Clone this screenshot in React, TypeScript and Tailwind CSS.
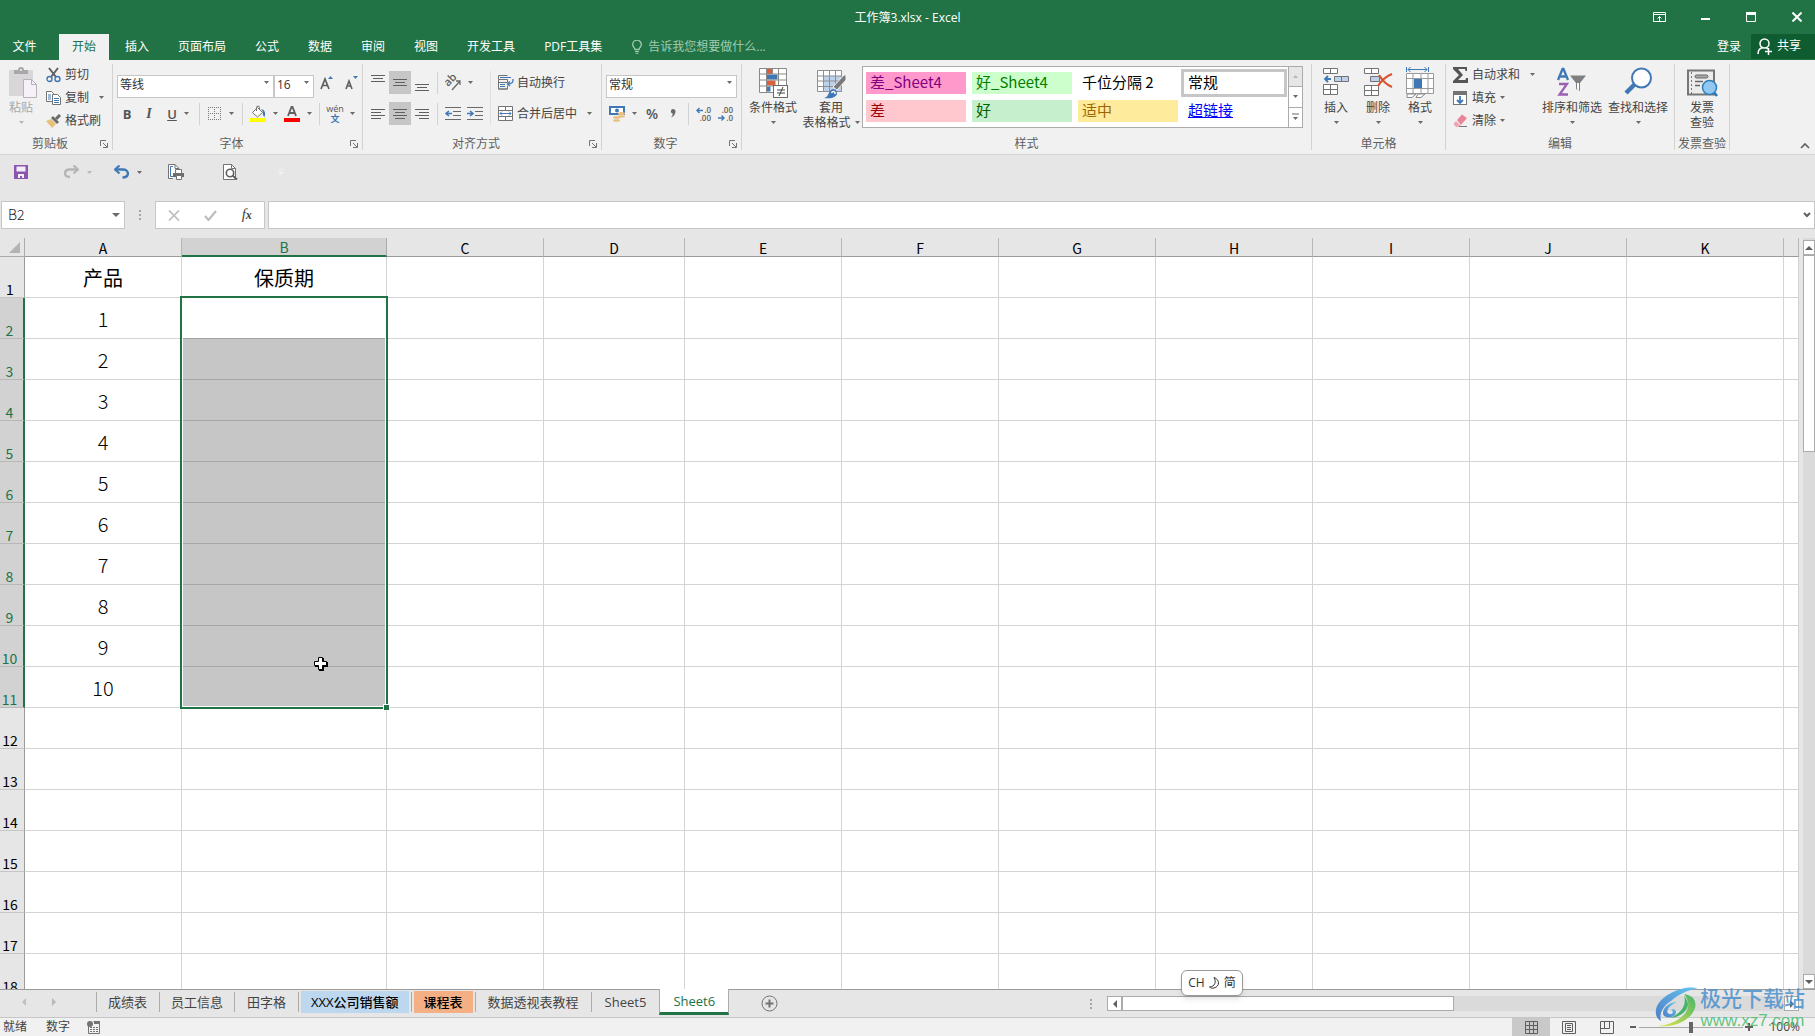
import type { ReactNode } from 'react';

const GRAY = '#737373';
const BLUE = '#3f78b5';

interface SvgProps {
  w: number;
  h: number;
  children: ReactNode;
}

function Svg({ w, h, children }: SvgProps) {
  return (
    <svg width={w} height={h} viewBox={`0 0 ${w} ${h}`} fill="none" className="shrink-0" aria-hidden="true">
      {children}
    </svg>
  );
}

function Caret({ light = false }: { light?: boolean }) {
  return (
    <Svg w={5} h={3}>
      <path d="M0 0h5L2.5 3z" fill={light ? '#b8b8b8' : '#6a6a6a'} />
    </Svg>
  );
}

function Lines({ rows, w = 14, h = 16 }: { rows: [number, number, number][]; w?: number; h?: number }) {
  return (
    <Svg w={w} h={h}>
      {rows.map(([x, y, len]) => (
        <path key={y} d={`M${x} ${y + 0.5}h${len}`} stroke="#5f5f5f" />
      ))}
    </Svg>
  );
}

/* clipboard */

function PasteIcon() {
  return (
    <Svg w={32} h={32}>
      <g transform="translate(4 0)">
        <rect x="0" y="3" width="24" height="26" rx="1" fill="#d9d6da" />
        <path d="M5 7V3h4a3 3 0 0 1 6 0h4v4z" fill="#a9a7aa" />
        <circle cx="12" cy="3" r="1" fill="#f1f1f1" />
        <path d="M14.5 12.5h8l5 5v13h-13z" fill="#f6f1f8" stroke="#b5b2b7" />
        <path d="M22.5 12.5v5h5" stroke="#b5b2b7" />
      </g>
    </Svg>
  );
}

function ScissorsIcon() {
  return (
    <Svg w={15} h={16}>
      <path d="M3 1l7 9M12 1L5 10" stroke="#5f5f5f" strokeWidth="2" />
      <circle cx="3.5" cy="12" r="2.5" stroke={BLUE} strokeWidth="1.4" />
      <circle cx="11.5" cy="12" r="2.5" stroke={BLUE} strokeWidth="1.4" />
    </Svg>
  );
}

function CopyIcon() {
  return (
    <Svg w={15} h={14}>
      <path d="M.5.5h5l2 2v8h-7z" fill="#fff" stroke={GRAY} />
      <path d="M2 4h3M2 6h3M2 8h3" stroke={BLUE} />
      <path d="M6.5 3.5h5l3 3v7h-8z" fill="#fff" stroke={GRAY} />
      <path d="M8 7.5h5M8 9.5h5M8 11.5h5" stroke={BLUE} />
    </Svg>
  );
}

function BrushIcon() {
  return (
    <Svg w={16} h={14}>
      <path d="M0 7l5-2 5 5-4 4z" fill="#e9bf7c" />
      <path d="M5 4l2-2 6 6-2 2z" fill="#6a6a6a" />
      <path d="M10 5l4-4" stroke="#6a6a6a" strokeWidth="3" />
    </Svg>
  );
}

/* font */

function BorderIcon() {
  return (
    <Svg w={14} h={14}>
      <path
        d="M.5 0v13M6.5 0v13M12.5 0v13M0 .5h13M0 6.5h13M0 12.5h13"
        stroke="#7a7a7a"
        strokeDasharray="1 1"
      />
    </Svg>
  );
}

function FillIcon() {
  return (
    <Svg w={16} h={17}>
      <path d="M2.5 7.5l5-5 5 5-5 4.500z" fill="#fff" stroke={GRAY} />
      <path d="M6.5 6V2.5a1.500 1.500 0 0 1 3 0V5" stroke={GRAY} />
      <path d="M11 4c4 1 5 4 3.500 8-1.500-1-2-3-1.500-5z" fill={BLUE} />
      <rect y="13" width="16" height="4" fill="#ffff00" />
    </Svg>
  );
}

function FontColorIcon() {
  return (
    <Svg w={16} h={17}>
      <path d="M4 11L7.5 2h1L12 11M5.2 8h5.600" stroke="#5f5f5f" strokeWidth="1.8" />
      <rect y="13" width="16" height="4" fill="#ff0000" />
    </Svg>
  );
}

/* alignment */

function OrientationIcon() {
  return (
    <Svg w={16} h={16}>
      <text
        x="0"
        y="0"
        fontSize="11"
        fill="#5f5f5f"
        fontWeight="600"
        fontFamily="Open Sans, sans-serif"
        transform="translate(3 12) rotate(-45)"
      >
        ab
      </text>
      <path d="M7 15L15 6M11 6h4v4" stroke="#6a6a6a" strokeWidth="1.3" />
    </Svg>
  );
}

function IndentIcon({ out = false }: { out?: boolean }) {
  return (
    <Svg w={16} h={13}>
      <path d="M0 .5h16M8 4.5h8M8 8.5h8M0 12.5h16" stroke="#6a6a6a" />
      {out ? (
        <path d="M7 6.5H2M4 4L1 6.5 4 9" stroke={BLUE} strokeWidth="1.6" />
      ) : (
        <path d="M0 6.5h5M3 4l3 2.500L3 9" stroke={BLUE} strokeWidth="1.6" />
      )}
    </Svg>
  );
}

function WrapIcon() {
  return (
    <Svg w={16} h={15}>
      <path d="M9.5.5h-9v4h9M.5 4.5v9.500h9v-3.500M.5 7.5h9v-3M.5 14h9" stroke={GRAY} />
      <path d="M2 2.5h11M2 9.5h5M2 11.5h5" stroke={BLUE} />
      <path d="M15 4c.5 4-2 5-5 5M12 6.5L9.5 9l2.500 2" stroke={BLUE} strokeWidth="1.3" />
    </Svg>
  );
}

function MergeIcon() {
  return (
    <Svg w={15} h={15}>
      <path d="M.5.5h14v14H.5zM.5 4.5h14M.5 10.5h14M7.5.5v4M7.5 10.5v4" fill="#fff" stroke={GRAY} />
      <path d="M2 7.5h11M4 5.5l-2 2 2 2M11 5.5l2 2-2 2" stroke={BLUE} />
    </Svg>
  );
}

/* number */

function CurrencyIcon() {
  return (
    <Svg w={16} h={16}>
      <rect x="1" y="1" width="14" height="7" fill="#fff" stroke={BLUE} strokeWidth="2" />
      <circle cx="8" cy="4.5" r="2" fill={BLUE} />
      <path d="M4 9h12v7H4z" fill="#f1f1f1" />
      <ellipse cx="12.5" cy="7.5" rx="3.5" ry="1.5" fill="#e9bf7c" />
      <ellipse cx="12.5" cy="10.5" rx="3.5" ry="1.2" fill="#e9bf7c" />
      <ellipse cx="7.5" cy="11.5" rx="3.5" ry="1.3" fill="#e9bf7c" />
      <ellipse cx="7.5" cy="14.5" rx="3.5" ry="1.3" fill="#e9bf7c" />
    </Svg>
  );
}

function DecimalIcon({ more = false }: { more?: boolean }) {
  return (
    <Svg w={16} h={14}>
      <g fontSize="8" fontFamily="Open Sans, sans-serif" fontWeight="600" fill="#5f5f5f">
        <text x="15" y="6" textAnchor="end">
          {more ? '.0' : '.00'}
        </text>
        <text x="15" y="14" textAnchor="end">
          {more ? '.00' : '.0'}
        </text>
      </g>
      {more ? (
        <path d="M7 3.5H1M3.5 1L1 3.5 3.5 6" stroke={BLUE} strokeWidth="1.4" />
      ) : (
        <path d="M0 11h6M3.5 8.5L6 11l-2.500 2.500" stroke={BLUE} strokeWidth="1.4" />
      )}
    </Svg>
  );
}

/* styles */

function ConditionalIcon() {
  return (
    <Svg w={30} h={32}>
      <path d="M1.5 1.5h27v24h-27z" fill="#fff" />
      <path d="M8.5 2h6v5h-6zM8.5 13.5h9v5h-9z" fill="#d9603b" />
      <path d="M8.5 7.5h11v5h-11zM8.5 19.5h4v5h-4z" fill={BLUE} />
      <path d="M1.5 1.5h27v24h-27zM8.5 1.5v24M1.5 7h27M1.5 13h27M1.5 19h27M14.5 1.5v5M20.5 1.5v24" stroke="#8a8a8a" />
      <rect x="15.5" y="18.5" width="14" height="12" fill="#fff" stroke="#6a6a6a" />
      <path d="M19 23h8M19 26h8M25 20l-4 9" stroke="#444" />
    </Svg>
  );
}

function TableFormatIcon() {
  return (
    <Svg w={30} h={32}>
      <path d="M1.5 3.5h24v21h-24z" fill="#fff" />
      <path d="M7.5 9h18v15.500h-18z" fill="#bdd1ea" />
      <path d="M1.5 3.5h24v21h-24zM7.5 3.5v21M13.5 3.5v21M19.5 3.5v21M1.5 9h24M1.5 14h24M1.5 19.5h24" stroke="#8f8f8f" />
      <path d="M28 8h2v5l-9 10-4-3z" fill="#7a7a7a" stroke="#f1f1f1" />
      <path d="M8 31c4-1 4-4 6-7s7-2 7 2-5 6-13 5z" fill={BLUE} />
      <path d="M15.5 26c1-2 4-2 3.500 1" stroke="#fff" strokeWidth="1.5" />
    </Svg>
  );
}

/* cells */

function InsertIcon() {
  return (
    <Svg w={30} h={32}>
      <path d="M2.5 1.5h14v5h-14zM9.5 1.5v5M2.5 17.5h14v10h-14zM9.5 17.5v10M2.5 22.5h14" fill="#fff" stroke={GRAY} />
      <path d="M13.5 9.5h14v5h-14zM20.5 9.5v5" fill="#bdd1ea" stroke={GRAY} />
      <path d="M10 12H4M7 9l-3 3 3 3" stroke={BLUE} strokeWidth="1.8" />
    </Svg>
  );
}

function DeleteIcon() {
  return (
    <Svg w={30} h={32}>
      <path d="M1.5 1.5h14v5h-14zM8.5 1.5v5M1.5 18.5h14v10h-14zM8.5 18.5v10M1.5 23.5h14" fill="#fff" stroke={GRAY} />
      <path d="M7.5 9.5h9v5h-9z" fill="#bdd1ea" stroke={GRAY} />
      <path d="M16 8c3 5 8 10 13 12M29 7c-5 2-11 7-14 12" stroke="#d9532c" strokeWidth="2.2" />
    </Svg>
  );
}

function FormatIcon() {
  return (
    <Svg w={30} h={32}>
      <path d="M1.5 0v5M23.5 0v5M3 2.5h19M5.5 0L3 2.5 5.5 5M19.5 0l2.500 2.500L19.5 5" stroke={BLUE} />
      <path d="M1.5 6.5h27v20h-27z" fill="#fff" />
      <path d="M1.5 6.5h27v20h-27zM8 6.5v20M16 6.5v20M23 6.5v20M1.5 11.5h27M1.5 21.5h27" stroke="#9a9a9a" />
      <rect x="9" y="12" width="8" height="9" fill={BLUE} />
      <path d="M2 30.5h5l4-3.500h-9zM11 30.5h5l4-3.500h-7z" fill="#fff" stroke="#8a8a8a" />
    </Svg>
  );
}

/* editing */

function SumIcon() {
  return (
    <Svg w={15} h={16}>
      <path d="M0 0h14v4h-1.500L12 2H5l5 6-5 5h7.500l.5-2H15v5H0v-2l6-6L0 2z" fill="#555" />
    </Svg>
  );
}

function FillDownIcon() {
  return (
    <Svg w={15} h={16}>
      <rect x=".5" y="1.5" width="13" height="13" fill="#fff" stroke={GRAY} />
      <rect width="14" height="4" y="1" fill={GRAY} />
      <path d="M7 6v7M4 10l3 3 3-3" stroke={BLUE} strokeWidth="1.8" />
    </Svg>
  );
}

function EraserIcon() {
  return (
    <Svg w={15} h={14}>
      <path d="M4 6l5-5.500 5 3.500-6 7z" fill="#e98598" />
      <path d="M3 7l4.500 4.500L5 13H3L.5 10z" fill="#f0a5b3" />
      <path d="M6 12.5h8" stroke="#777" />
    </Svg>
  );
}

function SortIcon() {
  return (
    <Svg w={32} h={32}>
      <path d="M2 13L6.5 2h1L12 13M3.5 9.5h7" stroke={BLUE} strokeWidth="2.3" />
      <path d="M3 17h8L3.5 27.5H12" stroke="#9b5fb5" strokeWidth="2.3" />
      <path d="M14 8.5h16l-6 7.500v8l-4-2v-6z" fill="#7f7f7f" />
      <path d="M21.5 16v6l1 1v-7" stroke="#fff" />
    </Svg>
  );
}

function FindIcon() {
  return (
    <Svg w={30} h={32}>
      <path d="M12 17L3 26" stroke={BLUE} strokeWidth="4.5" />
      <circle cx="18.5" cy="11" r="9.5" fill="#fdfdfd" stroke={BLUE} strokeWidth="2" />
    </Svg>
  );
}

function InvoiceIcon() {
  return (
    <Svg w={32} h={32}>
      <path d="M2 3.5h26v24H2z" fill="#ececec" stroke="#777" strokeWidth="2" />
      <path d="M5.5 5v22" stroke="#777" strokeDasharray="2 2" />
      <rect x="9" y="8" width="13" height="3" rx="1.5" fill="#aaa" stroke="#666" />
      <path d="M9 14.5h8M9 18.5h5" stroke="#666" strokeWidth="1.5" />
      <path d="M27 24l4 5" stroke="#2b79b3" strokeWidth="2.5" />
      <circle cx="23.5" cy="20.5" r="7" fill="#92c6f3" stroke="#2f7fb8" strokeWidth="1.5" />
    </Svg>
  );
}

/* ribbon building blocks */

function Group({ title, width, launcher, children }: { title: string; width: string; launcher?: boolean; children: ReactNode }) {
  return (
    <section className={`flex h-[94px] shrink-0 ${width}`}>
      <div className="flex min-w-0 flex-1 flex-col">
        <div className="h-[76px]">{children}</div>
        <div className="flex h-4 items-center">
          <h2 className="flex-1 text-center text-[12px] leading-4 whitespace-nowrap text-[#5f5f5f]">{title}</h2>
          {launcher && (
            <button aria-label={title} className="w-3">
              <Svg w={8} h={8}>
                <path d="M.5 6V.5H6M3 3l4 4M7.5 3v4.500H3" stroke={GRAY} />
              </Svg>
            </button>
          )}
        </div>
      </div>
      <div className="my-1 w-px bg-[#d2d2d2]" />
    </section>
  );
}

function BigButton({ icon, lines, width, dim, caret = 'below' }: { icon: ReactNode; lines: string[]; width: string; dim?: boolean; caret?: 'below' | 'side' | 'none' }) {
  return (
    <button
      className={`flex shrink-0 flex-col items-center pt-[7px] text-[12px] leading-[15px] whitespace-nowrap ${width} ${dim ? 'text-[#a8a8a8]' : 'text-[#444]'}`}
    >
      {icon}
      <span className="pt-px">{lines[0]}</span>
      <span className="flex h-[15px] items-center gap-1">
        {lines[1]}
        {caret !== 'none' && <Caret light={dim} />}
      </span>
    </button>
  );
}

function SmallButton({ icon, label, caret }: { icon: ReactNode; label: string; caret?: string }) {
  return (
    <button className="flex h-[23px] items-center text-[12px] leading-4 whitespace-nowrap text-[#444]">
      <span className="flex w-[19px]">{icon}</span>
      {label}
      {caret && (
        <span className={caret}>
          <Caret />
        </span>
      )}
    </button>
  );
}

function Tool({ label, width = 'w-[22px]', active, caret, children }: { label: string; width?: string; active?: boolean; caret?: boolean; children: ReactNode }) {
  return (
    <button
      aria-label={label}
      className={`flex h-[23px] shrink-0 items-center justify-center gap-[7px] text-[#555] ${width} ${active ? 'bg-[#c6c6c6]' : ''}`}
    >
      {children}
      {caret && <Caret />}
    </button>
  );
}

function Combo({ label, value, width }: { label: string; value: string; width: string }) {
  return (
    <label className={`relative block h-[23px] shrink-0 ${width}`}>
      <select
        aria-label={label}
        className="h-full w-full appearance-none border border-[#c6c6c6] bg-white pb-[2px] pl-[2px] text-[12px] leading-4 text-[#333]"
      >
        <option>{value}</option>
      </select>
      <span className="pointer-events-none absolute inset-y-0 right-[5px] flex items-center">
        <Caret />
      </span>
    </label>
  );
}

function Rule() {
  return <div className="mx-1 h-[22px] w-px shrink-0 bg-[#d2d2d2]" />;
}

const styleCells = [
  { label: '差_Sheet4', look: 'bg-[#ff99cc] text-[#800080]' },
  { label: '好_Sheet4', look: 'bg-[#ccffcc] text-[#008000]' },
  { label: '千位分隔 2', look: 'text-black' },
  { label: '常规', look: 'text-black outline-3 outline-[#c6c6c6]' },
  { label: '差', look: 'bg-[#ffc7ce] text-[#9c0006]' },
  { label: '好', look: 'bg-[#c6efce] text-[#006100]' },
  { label: '适中', look: 'bg-[#ffeb9c] text-[#9c6500]' },
  { label: '超链接', look: 'text-[#0000ff] underline' },
];

function StyleGallery() {
  return (
    <div className="mt-[6px] flex h-[62px] w-[441px] border border-[#ababab] bg-white">
      <div className="grid flex-1 grid-cols-4 gap-x-[6px] gap-y-[6px] py-[5px] pr-1 pl-[3px]">
        {styleCells.map((cell) => (
          <button
            key={cell.label}
            className={`h-[22px] pb-[2px] pl-1 text-left font-[Noto_Sans_CJK_SC,sans-serif] text-[15px] leading-5 whitespace-nowrap ${cell.look}`}
          >
            {cell.label}
          </button>
        ))}
      </div>
      <div className="flex w-[14px] flex-col border-l border-[#ababab]">
        <button aria-label="上一行" className="flex flex-1 items-center justify-center bg-[#e6e6e6]">
          <Svg w={5} h={3}>
            <path d="M0 3h5L2.5 0z" fill="#b8b8b8" />
          </Svg>
        </button>
        <button aria-label="下一行" className="flex flex-1 items-center justify-center border-y border-[#ababab]">
          <Caret />
        </button>
        <button aria-label="其他" className="flex flex-1 items-center justify-center">
          <Svg w={7} h={8}>
            <path d="M0 1h7" stroke="#6a6a6a" />
            <path d="M1 4h5L3.5 7z" fill="#6a6a6a" />
          </Svg>
        </button>
      </div>
    </div>
  );
}

function Ribbon() {
  return (
    <div className="flex h-[95px] shrink-0 border-b border-[#d2d2d2] bg-[#f1f1f1]">
      <Group title="剪贴板" width="w-[113px]" launcher>
        <div className="flex">
          <BigButton icon={<PasteIcon />} lines={['粘贴', '']} width="w-[42px]" dim />
          <div className="flex flex-col items-start pt-[3px] pl-1">
            <SmallButton icon={<ScissorsIcon />} label="剪切" />
            <SmallButton icon={<CopyIcon />} label="复制" caret="pl-[10px]" />
            <SmallButton icon={<BrushIcon />} label="格式刷" />
          </div>
        </div>
      </Group>

      <Group title="字体" width="w-[250px]" launcher>
        <div className="flex flex-col gap-2 pt-[11px] pl-1">
          <div className="flex">
            <Combo label="字体" value="等线" width="w-[157px]" />
            <Combo label="字号" value="16" width="w-10" />
            <Tool label="增大字号" width="w-[26px]">
              <Svg w={14} h={14}>
                <path d="M1 13L5 3l4 10M2.5 9.5h5" stroke="#5f5f5f" strokeWidth="1.7" />
                <path d="M8 3h5L10.5 0z" fill={BLUE} />
              </Svg>
            </Tool>
            <Tool label="减小字号" width="w-[22px]">
              <Svg w={13} h={14}>
                <path d="M1 13l3-8 3 8M2 10h4" stroke="#5f5f5f" strokeWidth="1.6" />
                <path d="M8 0h5l-2.500 3z" fill={BLUE} />
              </Svg>
            </Tool>
          </div>
          <div className="flex items-center">
            <Tool label="加粗" width="w-5">
              <b className="text-[13px] leading-4">B</b>
            </Tool>
            <Tool label="倾斜" width="w-6">
              <i className="font-[Liberation_Serif,serif] text-[14px] leading-4 font-bold">I</i>
            </Tool>
            <Tool label="下划线" width="w-[34px]" caret>
              <span className="text-[13px] leading-4 font-semibold underline">U</span>
            </Tool>
            <Rule />
            <Tool label="边框" width="w-[34px]" caret>
              <BorderIcon />
            </Tool>
            <Rule />
            <Tool label="填充颜色" width="w-[34px]" caret>
              <FillIcon />
            </Tool>
            <Tool label="字体颜色" width="w-[34px]" caret>
              <FontColorIcon />
            </Tool>
            <Rule />
            <Tool label="拼音" width="w-[34px]" caret>
              <span className="flex w-4 flex-col items-center text-[9px] leading-[10px]">
                <span>wén</span>
                <span className="font-bold text-[#3f78b5]">文</span>
              </span>
            </Tool>
          </div>
        </div>
      </Group>

      <Group title="对齐方式" width="w-[239px]" launcher>
        <div className="flex pt-[11px] pl-1">
          <div className="flex flex-col gap-2">
            <div className="flex items-center">
              <Tool label="顶端对齐">
                <Lines rows={[[0, 0, 14], [2, 3, 10], [0, 6, 14]]} />
              </Tool>
              <Tool label="垂直居中" active>
                <Lines rows={[[0, 4, 14], [2, 7, 10], [0, 10, 14]]} />
              </Tool>
              <Tool label="底端对齐">
                <Lines rows={[[0, 9, 14], [2, 12, 10], [0, 15, 14]]} />
              </Tool>
              <Rule />
              <Tool label="方向" width="w-[34px]" caret>
                <OrientationIcon />
              </Tool>
            </div>
            <div className="flex items-center">
              <Tool label="左对齐">
                <Lines rows={[[0, 3, 14], [0, 6, 10], [0, 9, 14], [0, 12, 10]]} />
              </Tool>
              <Tool label="居中" active>
                <Lines rows={[[0, 3, 14], [2, 6, 10], [0, 9, 14], [2, 12, 10]]} />
              </Tool>
              <Tool label="右对齐">
                <Lines rows={[[0, 3, 14], [4, 6, 10], [0, 9, 14], [4, 12, 10]]} />
              </Tool>
              <Rule />
              <Tool label="减少缩进量">
                <IndentIcon out />
              </Tool>
              <Tool label="增加缩进量">
                <IndentIcon />
              </Tool>
            </div>
          </div>
          <div className="mx-1 h-[54px] w-px bg-[#dedede]" />
          <div className="flex flex-col gap-2 pl-[3px]">
            <SmallButton icon={<WrapIcon />} label="自动换行" />
            <SmallButton icon={<MergeIcon />} label="合并后居中" caret="pl-[10px]" />
          </div>
        </div>
      </Group>

      <Group title="数字" width="w-[140px]" launcher>
        <div className="flex flex-col gap-2 pt-[11px] pl-1">
          <Combo label="数字格式" value="常规" width="w-[131px]" />
          <div className="flex items-center">
            <Tool label="会计数字格式" width="w-[34px]" caret>
              <CurrencyIcon />
            </Tool>
            <Tool label="百分比样式" width="w-6">
              <span className="text-[14px] leading-4 font-semibold">%</span>
            </Tool>
            <Tool label="千位分隔样式" width="w-5">
              <Svg w={8} h={9}>
                <path d="M3 0a2.500 2.500 0 0 1 2.500 3C5 6 3 8 1 8.5c1.500-2 2-3 1.500-4A2.300 2.300 0 0 1 3 0z" fill="#6a6a6a" />
              </Svg>
            </Tool>
            <Rule />
            <Tool label="增加小数位数">
              <DecimalIcon more />
            </Tool>
            <Tool label="减少小数位数">
              <DecimalIcon />
            </Tool>
          </div>
        </div>
      </Group>

      <Group title="样式" width="w-[570px]">
        <div className="flex pl-1">
          <BigButton icon={<ConditionalIcon />} lines={['条件格式', '']} width="w-[54px]" />
          <BigButton icon={<TableFormatIcon />} lines={['套用', '表格格式']} width="w-[62px]" caret="side" />
          <StyleGallery />
        </div>
      </Group>

      <Group title="单元格" width="w-[134px]">
        <div className="flex pl-[3px]">
          <BigButton icon={<InsertIcon />} lines={['插入', '']} width="w-[42px]" />
          <BigButton icon={<DeleteIcon />} lines={['删除', '']} width="w-[42px]" />
          <BigButton icon={<FormatIcon />} lines={['格式', '']} width="w-[42px]" />
        </div>
      </Group>

      <Group title="编辑" width="w-[229px]">
        <div className="flex pl-[7px]">
          <div className="flex w-[86px] flex-col items-start pt-[3px]">
            <SmallButton icon={<SumIcon />} label="自动求和" caret="pl-[10px]" />
            <SmallButton icon={<FillDownIcon />} label="填充" caret="pl-1" />
            <SmallButton icon={<EraserIcon />} label="清除" caret="pl-1" />
          </div>
          <BigButton icon={<SortIcon />} lines={['排序和筛选', '']} width="w-[66px]" />
          <BigButton icon={<FindIcon />} lines={['查找和选择', '']} width="w-[66px]" />
        </div>
      </Group>

      <Group title="发票查验" width="w-[55px]">
        <BigButton icon={<InvoiceIcon />} lines={['发票', '查验']} width="w-[54px]" caret="none" />
      </Group>

      <div className="flex flex-1 items-end justify-end pr-[5px] pb-[5px]">
        <button aria-label="折叠功能区">
          <Svg w={10} h={6}>
            <path d="M1 5l4-4 4 4" stroke="#5f5f5f" strokeWidth="1.7" />
          </Svg>
        </button>
      </div>
    </div>
  );
}

/* title bar, tabs */

function TitleBar() {
  return (
    <header className="grid h-[34px] shrink-0 grid-cols-3 items-center text-white">
      <div />
      <h1 className="pt-px text-center text-[12px] leading-4">工作簿3.xlsx - Excel</h1>
      <div className="flex justify-end gap-[10px]">
        <button aria-label="功能区显示选项" className="flex h-8 w-9 items-center justify-center">
          <Svg w={13} h={10}>
            <path d="M.5.5h12v9H.5zM.5 2.5h12" stroke="#fff" />
            <path d="M6.5 9V4.5M4.5 6.5l2-2 2 2" stroke="#fff" />
          </Svg>
        </button>
        <button aria-label="最小化" className="flex h-8 w-9 items-center justify-center">
          <Svg w={9} h={10}>
            <path d="M0 7h9" stroke="#fff" strokeWidth="2" />
          </Svg>
        </button>
        <button aria-label="最大化" className="flex h-8 w-9 items-center justify-center">
          <Svg w={10} h={10}>
            <path d="M.5.5h9v9h-9z" stroke="#fff" />
            <path d="M0 1.5h10" stroke="#fff" strokeWidth="3" />
          </Svg>
        </button>
        <button aria-label="关闭" className="flex h-8 w-9 items-center justify-center">
          <Svg w={10} h={10}>
            <path d="M.5.5l9 9M9.5.5l-9 9" stroke="#fff" strokeWidth="2" />
          </Svg>
        </button>
      </div>
    </header>
  );
}

const ribbonTabs = ['插入', '页面布局', '公式', '数据', '审阅', '视图', '开发工具', 'PDF工具集'];

function RibbonTabs() {
  return (
    <nav className="flex h-[26px] shrink-0 text-[12px] leading-[24px] whitespace-nowrap text-white">
      <button className="w-[59px] pr-[10px]">文件</button>
      <button className="bg-[#f1f1f1] px-[13px] text-[#217346]">开始</button>
      <div className="flex gap-px pl-[2px]">
        {ribbonTabs.map((tab) => (
          <button key={tab} className="px-[14px]">
            {tab}
          </button>
        ))}
      </div>
      <button className="flex items-center gap-[6px] pl-4 text-[#a0cbb0]">
        <Svg w={10} h={14}>
          <path d="M3 9.5C3 8 .7 7 .7 4.5a4.300 4.300 0 0 1 8.600 0C9.3 7 7 8 7 9.5z" stroke="#a0cbb0" strokeWidth="1.3" />
          <path d="M3 11.5h4M3.5 13.3h3" stroke="#a0cbb0" />
        </Svg>
        告诉我您想要做什么...
      </button>
      <div className="flex flex-1 justify-end">
        <button className="px-[10px]">登录</button>
        <button className="flex h-[25px] w-16 items-center gap-1 bg-[#0e5c2f] pb-px pl-[6px]">
          <Svg w={16} h={17}>
            <circle cx="7.5" cy="5.5" r="4.5" stroke="#fff" strokeWidth="1.5" />
            <path d="M1 16c0-4 2-6 5-6.500M9 9.5l2 1.500M8 13.5h7M11.5 10v7" stroke="#fff" strokeWidth="1.5" />
          </Svg>
          共享
        </button>
      </div>
    </nav>
  );
}

function QuickAccess() {
  return (
    <div className="flex h-[46px] shrink-0 items-center pb-3 pl-[14px]">
      <button aria-label="保存">
        <Svg w={14} h={14}>
          <path d="M0 0h14v14H0z" fill="#8b55ad" />
          <path d="M2.5 1.5h9v5h-9zM4 9h6v4H8v-2H6v2H4z" fill="#f3edf7" />
        </Svg>
      </button>
      <button aria-label="恢复" className="ml-9 flex items-center gap-2">
        <Svg w={15} h={14}>
          <path d="M13 4.5H5.5C-.5 5-.5 12 6 12" stroke="#b5b5b5" strokeWidth="2.4" />
          <path d="M9.5.5l4.500 4-4.500 4" stroke="#b5b5b5" strokeWidth="2.2" />
        </Svg>
        <Caret light />
      </button>
      <button aria-label="撤消" className="ml-[22px] flex items-center gap-2">
        <Svg w={15} h={14}>
          <path d="M2 4.5h7.500c6 .5 6 8-1 8" stroke={BLUE} strokeWidth="2.4" />
          <path d="M5.5.5L1 4.5l4.500 4" stroke={BLUE} strokeWidth="2.2" />
        </Svg>
        <Caret />
      </button>
      <button aria-label="快速打印" className="ml-[26px]">
        <Svg w={17} h={16}>
          <path d="M5 14.5H.5V.5H7l4 4" fill="#fff" stroke={GRAY} />
          <path d="M7 .5v4h4" stroke={GRAY} />
          <path d="M5 2.5H2.5v10H5" stroke={BLUE} />
          <path d="M5 9h11v4H5z" fill="#6a6a6a" />
          <path d="M7.5 5.5h6v4h-6zM8.5 11.5h5v4h-5z" fill="#fff" stroke={GRAY} />
        </Svg>
      </button>
      <button aria-label="打印预览" className="ml-[38px]">
        <Svg w={15} h={16}>
          <path d="M.5.5h8l4 4v11H.5z" fill="#fff" stroke={GRAY} />
          <path d="M8.5.5v4h4" stroke={GRAY} />
          <circle cx="7" cy="9" r="3.7" fill="#fff" stroke="#5f5f5f" strokeWidth="1.6" />
          <path d="M9.5 11.5l4.500 4" stroke="#5f5f5f" strokeWidth="2" />
        </Svg>
      </button>
      <button aria-label="自定义快速访问工具栏" className="ml-10">
        <Svg w={6} h={7}>
          <path d="M0 .5h6M.5 3h5L3 6z" stroke="#f0f0f0" fill="#f0f0f0" />
        </Svg>
      </button>
    </div>
  );
}

function FormulaBar() {
  return (
    <div className="flex h-7 shrink-0 pl-px">
      <label className="relative w-[124px]">
        <input
          aria-label="名称框"
          defaultValue="B2"
          className="h-full w-full border border-[#c6c6c6] bg-white pb-[3px] pl-[6px] font-[Noto_Sans_CJK_SC,sans-serif] text-[14px] leading-5 font-light text-[#222]"
        />
        <span className="pointer-events-none absolute inset-y-0 right-[5px] flex items-center">
          <Svg w={8} h={4}>
            <path d="M0 0h8L4 4z" fill="#6a6a6a" />
          </Svg>
        </span>
      </label>
      <div className="flex w-[30px] items-center justify-center">
        <Svg w={2} h={10}>
          <path d="M0 0h2v2H0zM0 4h2v2H0zM0 8h2v2H0z" fill="#a6a6a6" />
        </Svg>
      </div>
      <div className="flex w-[110px] items-center justify-around border border-[#c6c6c6] bg-white">
        <button aria-label="取消">
          <Svg w={12} h={11}>
            <path d="M1 .5l10 10M11 .5l-10 10" stroke="#bdbdbd" strokeWidth="1.7" />
          </Svg>
        </button>
        <button aria-label="输入">
          <Svg w={13} h={11}>
            <path d="M1 6l3.500 4L12 1" stroke="#bdbdbd" strokeWidth="2.2" />
          </Svg>
        </button>
        <button aria-label="插入函数" className="pb-[2px] font-[Liberation_Serif,serif] text-[15px] leading-5 text-[#444] italic">
          f<span className="text-[12px] font-bold">x</span>
        </button>
      </div>
      <label className="relative ml-[3px] flex-1">
        <input aria-label="编辑栏" className="h-full w-full border border-[#c6c6c6] bg-white px-2 text-[13px]" />
        <span className="pointer-events-none absolute inset-y-0 right-1 flex items-center">
          <Svg w={8} h={6}>
            <path d="M1 1l3 3 3-3" stroke="#5f5f5f" strokeWidth="2" />
          </Svg>
        </span>
      </label>
    </div>
  );
}

/* sheet */

const columns = [
  { name: 'A', width: 'w-[157px]' },
  { name: 'B', width: 'w-[205px]' },
  { name: 'C', width: 'w-[157px]' },
  { name: 'D', width: 'w-[141px]' },
  { name: 'E', width: 'w-[157px]' },
  { name: 'F', width: 'w-[157px]' },
  { name: 'G', width: 'w-[157px]' },
  { name: 'H', width: 'w-[157px]' },
  { name: 'I', width: 'w-[157px]' },
  { name: 'J', width: 'w-[157px]' },
  { name: 'K', width: 'w-[157px]' },
  { name: '', width: '' },
];

const rowCount = 18;

function cellText(row: number, column: string) {
  if (row === 1) return { A: '产品', B: '保质期' }[column];
  if (column === 'A' && row <= 11) return String(row - 1);
  return undefined;
}

function Selection() {
  return (
    <div className="pointer-events-none absolute -top-[2px] -left-[2px] z-10 h-[413px] w-[208px] border-2 border-[#217346]">
      <div className="h-full border border-white" />
      <div className="absolute -right-1 -bottom-1 h-[7px] w-[7px] border border-white bg-[#217346]" />
      <div className="absolute right-[57px] bottom-[35px]">
        <Svg w={16} h={16}>
          <path d="M6 2h5v4h4v5h-4v4H6v-4H2V6h4z" fill="#000" />
          <path d="M5.5 1.5h4v4h4v4h-4v4h-4v-4h-4v-4h4z" fill="#fff" stroke="#000" />
        </Svg>
      </div>
    </div>
  );
}

function Sheet() {
  return (
    <table className="w-full table-fixed border-separate border-spacing-0 font-[Noto_Sans_CJK_SC,sans-serif]">
      <thead>
        <tr className="h-[19px] text-[14px] leading-4">
          <th className="w-[25px] border-r border-b border-[#ababab] p-0">
            <span className="flex justify-end pr-1">
              <Svg w={11} h={11}>
                <path d="M11 0v11H0z" fill="#b4b4b4" />
              </Svg>
            </span>
          </th>
          {columns.map(({ name, width }) => (
            <th
              key={name}
              className={`border-r p-0 pt-px font-normal ${width} ${
                name === 'B'
                  ? 'border-b-2 border-r-[#ababab] border-b-[#217346] bg-[#d2d2d2] text-[#217346]'
                  : 'border-b border-r-[#b8b8b8] border-b-[#9b9b9b] text-black'
              }`}
            >
              {name}
            </th>
          ))}
        </tr>
      </thead>
      <tbody>
        {Array.from({ length: rowCount }, (_, i) => i + 1).map((row) => {
          const inSelection = row >= 2 && row <= 11;
          return (
            <tr key={row} className="h-[41px]">
              <th
                className={`border-b p-0 align-bottom text-[14px] leading-4 font-normal ${
                  inSelection
                    ? 'border-r-2 border-r-[#217346] border-b-[#b8b8b8] bg-[#d2d2d2] text-[#217346]'
                    : 'border-r border-r-[#9b9b9b] border-b-[#c6c6c6] text-black'
                }`}
              >
                <span className="block pr-1">{row}</span>
              </th>
              {columns.map(({ name }) => (
                <td
                  key={name}
                  className={`relative border-r border-b p-0 pt-[2px] text-center text-[20px] leading-6 text-black ${
                    name === 'B' && row > 2 && inSelection
                      ? 'border-[#a6a6a6] bg-[#c6c6c6]'
                      : name === 'B' && row === 2
                        ? 'border-r-[#d4d4d4] border-b-[#a6a6a6] bg-white'
                        : 'border-[#d4d4d4] bg-white'
                  } ${row === 1 ? 'font-normal' : 'font-light'}`}
                >
                  {cellText(row, name)}
                  {name === 'B' && row === 2 && <Selection />}
                </td>
              ))}
            </tr>
          );
        })}
      </tbody>
    </table>
  );
}

function Arrow({ d, fill = '#5f5f5f' }: { d: string; fill?: string }) {
  return (
    <Svg w={8} h={8}>
      <path d={d} fill={fill} />
    </Svg>
  );
}

function VerticalScroll() {
  return (
    <div className="ml-1 flex w-3 shrink-0 flex-col bg-[#dadada] pt-[2px]">
      <button aria-label="向上滚动" className="flex h-[15px] shrink-0 items-center justify-center border border-[#ababab] bg-white">
        <Arrow d="M0 6h8L4 2z" />
      </button>
      <div className="h-[197px] shrink-0 border border-[#ababab] bg-white" />
      <div className="flex-1" />
      <button aria-label="向下滚动" className="flex h-[15px] shrink-0 items-center justify-center border border-[#ababab] bg-white">
        <Arrow d="M0 2h8L4 6z" />
      </button>
    </div>
  );
}

const sheetTabs = [
  { name: '成绩表', look: 'pr-3 pl-[11px]' },
  { name: '员工信息', look: 'px-[11px]' },
  { name: '田字格', look: 'px-3' },
  { name: 'XXX公司销售额', look: 'mx-[2px] px-[10px] bg-[#bdd7ee] text-black font-medium' },
  { name: '课程表', look: 'mx-[2px] px-[10px] bg-[#f4b084] text-black font-medium' },
  { name: '数据透视表教程', look: 'px-3' },
  { name: 'Sheet5', look: 'px-[13px]' },
];

function SheetTabs() {
  return (
    <div className="flex h-7 shrink-0 border-t border-[#9b9b9b]">
      <button aria-label="上一张工作表" className="flex w-12 items-center justify-center pb-1">
        <Arrow d="M6 0v8L2 4z" fill="#c0c0c0" />
      </button>
      <button aria-label="下一张工作表" className="mr-4 flex w-8 items-center pb-1 pl-[2px]">
        <Arrow d="M2 0v8l4-4z" fill="#b8b8b8" />
      </button>
      <div className="flex items-start text-[13px] leading-[18px] whitespace-nowrap text-[#444]">
        {sheetTabs.map((tab) => (
          <div key={tab.name} className="flex h-6 items-center">
            <div className="h-5 w-px bg-[#ababab]" />
            <button className={`h-[22px] pb-px ${tab.look}`}>{tab.name}</button>
          </div>
        ))}
        <button className="-mt-px h-[26px] border-x border-b-3 border-x-[#ababab] border-b-[#217346] bg-white px-[13px] text-[#217346]">
          Sheet6
        </button>
      </div>
      <button aria-label="新工作表" className="ml-8 flex items-center">
        <Svg w={17} h={17}>
          <circle cx="8.5" cy="8.5" r="7.5" stroke={GRAY} />
          <path d="M8.5 4.5v8M4.5 8.5h8" stroke={GRAY} strokeWidth="2" />
        </Svg>
      </button>
      <div className="flex flex-1 items-center justify-end">
        <Svg w={2} h={10}>
          <path d="M0 0h2v2H0zM0 4h2v2H0zM0 8h2v2H0z" fill="#a6a6a6" />
        </Svg>
      </div>
      <div className="mt-[6px] mr-4 ml-[15px] flex h-[15px] w-[692px] bg-[#dadada]">
        <button aria-label="向左滚动" className="flex w-[15px] items-center justify-center border border-[#ababab] bg-white">
          <Arrow d="M6 0v8L2 4z" />
        </button>
        <div className="w-[48%] border border-[#ababab] bg-white" />
        <div className="flex-1" />
        <button aria-label="向右滚动" className="flex w-[15px] items-center justify-center border border-[#ababab] bg-white">
          <Arrow d="M2 0v8l4-4z" />
        </button>
      </div>
    </div>
  );
}

function StatusBar() {
  return (
    <footer className="flex h-[19px] shrink-0 items-center border-t border-[#c6c6c6] bg-[#f1f1f1] pr-[15px] pl-[3px] text-[12px] leading-[18px] whitespace-nowrap text-[#444]">
      <span>就绪</span>
      <span className="ml-[19px]">数字</span>
      <button aria-label="录制宏" className="ml-[17px]">
        <Svg w={13} h={13}>
          <path d="M1.5 4.5v8h11v-12h-6" stroke={GRAY} />
          <path d="M7 0h6v3H7z" fill={GRAY} />
          <circle cx="3" cy="3" r="3" fill={GRAY} />
          <path d="M3 6.5h8M3 8.5h8M3 10.5h8" stroke={GRAY} strokeDasharray="2 1" />
        </Svg>
      </button>
      <div className="flex-1" />
      <button aria-label="普通" className="flex h-[18px] w-[38px] items-center justify-center bg-[#c9c9c9]">
        <Svg w={13} h={13}>
          <path d="M.5.5h12v12H.5zM4.5.5v12M8.5.5v12M.5 4.5h12M.5 8.5h12" stroke="#5f5f5f" />
        </Svg>
      </button>
      <button aria-label="页面布局" className="flex w-[38px] justify-center">
        <Svg w={14} h={13}>
          <path d="M.5.5h13v12H.5zM3.5 2.5h7v8h-7zM5 4.5h4M5 6.5h4M5 8.5h4" stroke="#5f5f5f" />
        </Svg>
      </button>
      <button aria-label="分页预览" className="flex w-[38px] justify-center">
        <Svg w={14} h={13}>
          <path d="M.5.5h13v12H.5zM4.5.5v7M9.5.5v7M.5 7.5h9" stroke="#5f5f5f" />
        </Svg>
      </button>
      <button aria-label="缩小" className="ml-1 w-[9px]">
        <Svg w={6} h={8}>
          <path d="M0 4h6" stroke="#5f5f5f" strokeWidth="2" />
        </Svg>
      </button>
      <input
        type="range"
        aria-label="缩放"
        className="h-3 w-[104px] appearance-none bg-[linear-gradient(#a6a6a6,#a6a6a6)] bg-[length:100%_1px] bg-center bg-no-repeat [&::-webkit-slider-thumb]:h-[11px] [&::-webkit-slider-thumb]:w-1 [&::-webkit-slider-thumb]:appearance-none [&::-webkit-slider-thumb]:bg-[#666]"
      />
      <button aria-label="放大" className="ml-[2px]">
        <Svg w={8} h={8}>
          <path d="M0 4h8M4 0v8" stroke="#5f5f5f" strokeWidth="2" />
        </Svg>
      </button>
      <span className="ml-4">100%</span>
    </footer>
  );
}

function Watermark() {
  return (
    <div className="pointer-events-none absolute right-[10px] bottom-[7px] z-20 flex items-center gap-[2px]">
      <svg width="43" height="42" viewBox="0 0 43 42" fill="none" aria-hidden="true">
        <defs>
          <linearGradient id="wave" x1="0" y1="1" x2="1" y2="0">
            <stop offset="0" stopColor="#4f7fc9" />
            <stop offset="1" stopColor="#62c6ee" />
          </linearGradient>
          <linearGradient id="leaf" x1="0" y1="1" x2="1" y2="0">
            <stop offset="0" stopColor="#e4e34a" />
            <stop offset="1" stopColor="#46b46c" />
          </linearGradient>
        </defs>
        <path d="M43 2C28-1 8 8 2 20c-3 8 0 13 4 15-2-8 2-15 10-20C23 9 30 5 43 2z" fill="url(#wave)" />
        <path d="M22 16c-8 0-14 6-14 11s8 6 12 2c3-4-1-7-4-5 3 1 2 4-1 4-5 0-3-8 7-12z" fill="url(#wave)" />
        <path d="M29 8c8 1 13 6 11 14-3 10-17 20-37 18 14-1 28-9 30-19 1-5-1-9-4-13z" fill="url(#leaf)" />
        <path d="M29 10c3 8-2 17-14 22 8 0 17-6 18-13 0-4-2-7-4-9z" fill="#46b46c" />
      </svg>
      <div className="text-center">
        <p className="mb-1 font-[Noto_Sans_CJK_SC,sans-serif] text-[21px] leading-6 font-medium text-[#4a90cf]/85">极光下载站</p>
        <p className="font-[Liberation_Sans,sans-serif] text-[17px] leading-4 font-medium text-[#4fbf74]/90">www.xz7.com</p>
      </div>
    </div>
  );
}

export default function App() {
  return (
    <div className="relative flex h-screen flex-col overflow-hidden bg-[#217346] font-[Open_Sans,Noto_Sans_CJK_SC,sans-serif]">
      <TitleBar />
      <RibbonTabs />
      <Ribbon />
      <div className="flex min-h-0 flex-1 flex-col bg-[#e6e6e6]">
        <QuickAccess />
        <FormulaBar />
        <main className="mt-[9px] flex min-h-0 flex-1">
          <div className="min-w-0 flex-1 overflow-hidden">
            <Sheet />
          </div>
          <VerticalScroll />
        </main>
        <SheetTabs />
      </div>
      <StatusBar />
      <div className="absolute right-[572px] bottom-10 z-20 flex h-[26px] w-[62px] items-center justify-center gap-1 rounded-md border border-[#999] bg-white text-[12px] text-[#333] shadow-md">
        CH
        <Svg w={11} h={12}>
          <path d="M5 .5c6 2 6 9 0 10.500-2 .4-3.500 0-4.500-1C6 9.5 7.5 5 5 .5z" stroke="#333" />
        </Svg>
        简
      </div>
      <Watermark />
    </div>
  );
}
